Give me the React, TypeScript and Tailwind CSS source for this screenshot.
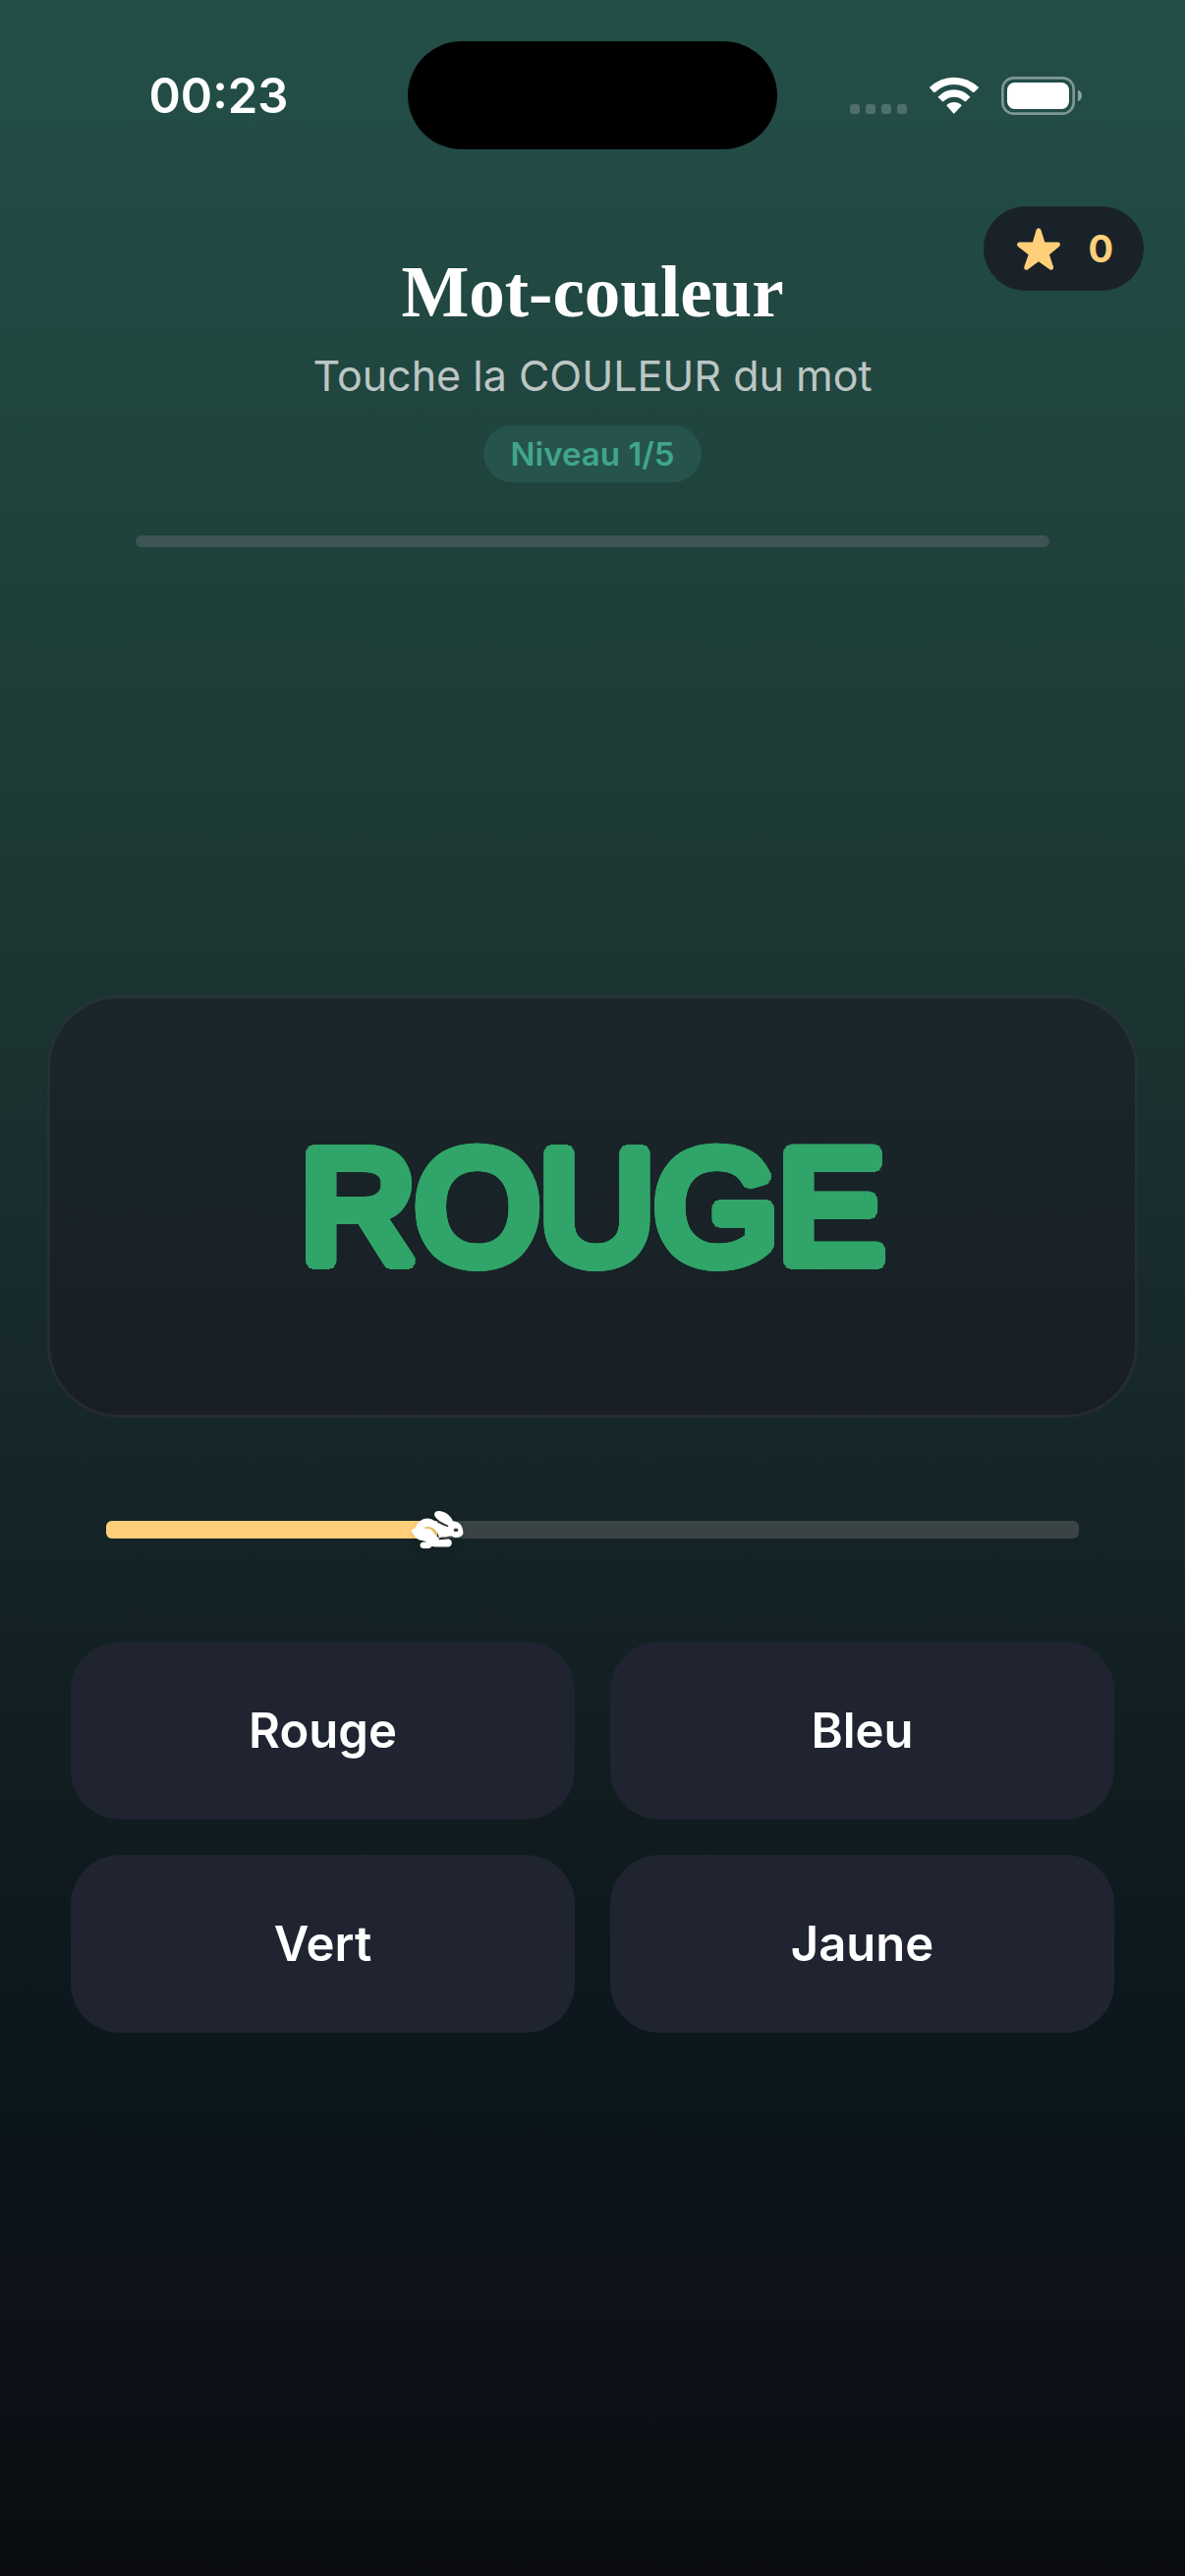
import React, { useState } from 'react';

interface Choice {
  id: string;
  label: string;
}

const CHOICES: Choice[] = [
  { id: 'red', label: 'Rouge' },
  { id: 'blue', label: 'Bleu' },
  { id: 'green', label: 'Vert' },
  { id: 'yellow', label: 'Jaune' },
];

const WORD_COLOR = '#31a569';

// Ring of hard shadows that thickens the word and rounds its corners
const roundedOutline = (radius: number, color: string) =>
  Array.from({ length: 32 }, (_, i) => {
    const angle = (i / 32) * Math.PI * 2;
    return `${(Math.cos(angle) * radius).toFixed(2)}px ${(Math.sin(angle) * radius).toFixed(2)}px 0 ${color}`;
  }).join(', ');

const WifiIcon = () => (
  <svg width="52" height="38" viewBox="315 85 153 114" fill="#fff" aria-hidden="true">
    <path d="M316 118 Q349 87 391 87 Q433 87 467 118 Q467 120 453 132 Q451 134 448 132 Q424 109 391 109 Q359 109 334 132 Q331 134 329 132 Z" />
    <path d="M342 147 Q364 125 391 125 Q419 125 441 147 L428 160 Q426 162 423 160 Q409 147 391 147 Q374 147 360 160 Q357 162 355 160 Z" />
    <path d="M368 173 Q378 163 391 163 Q405 163 415 173 L393 197 Q391 199 389 197 Z" />
  </svg>
);

const BatteryIcon = () => (
  <svg width="82" height="39" viewBox="534 84 246 117" aria-hidden="true">
    <rect x="538" y="88" width="217" height="109" rx="34" fill="none" stroke="#fff" strokeOpacity=".42" strokeWidth="8" />
    <rect x="552" y="102" width="189" height="81" rx="23" fill="#fff" />
    <path d="M768 125 Q780 129 780 142 Q780 155 768 160 Z" fill="#fff" fillOpacity=".48" />
  </svg>
);

const StarIcon = () => (
  <svg width="44" height="43" viewBox="0 0 132 128" fill="#ffd079" aria-hidden="true">
    <path d="M59 5 Q61 0 66 0 Q71 0 73 5 L85 43 L126 43 Q132 44 132 50 Q132 54 128 57 L99 81 L111 118 Q112 125 108 127 Q104 129 100 126 L66 102 L33 126 Q29 129 25 127 Q21 124 22 118 L35 81 L4 57 Q0 54 0 50 Q1 44 6 43 L48 43 Z" />
  </svg>
);

const RabbitIcon = () => (
  <svg width="54" height="39" viewBox="55 82 162 117" fill="#fff" className="drop-shadow-md" aria-hidden="true">
    <path
      fillRule="evenodd"
      d="M57 143 Q61 137 68 137 C74 119 88 106 106 106 C120 106 128 115 142 121 C151 126 159 130 169 132 Q172 129 167 126 L149 117 C139 112 128 103 127 94 C127 84 137 82 147 84 C164 87 178 99 184 114 C194 115 203 118 207 125 C213 132 216 144 215 153 C211 163 199 165 187 164 L180 160 C170 161 166 163 157 163 L144 164 C140 168 139 171 143 171 L168 169 C178 169 182 177 180 184 C178 192 171 194 161 193 L134 193 C119 193 112 185 105 180 Q98 174 82 172 C73 169 68 164 66 158 Q57 151 57 143 Z M193 137 A5 5 0 1 0 193 146 A5 5 0 1 0 193 137 Z M97 133 Q96 138 102 137 C116 136 122 145 130 157 Q136 167 142 163 C139 151 130 136 114 132 Q101 130 97 133 Z"
    />
    <path d="M84 184 C88 177 99 177 107 180 L121 190 C116 198 107 199 96 198 C87 198 82 192 84 184 Z" />
  </svg>
);

const StatusBar = () => (
  <div className="grid grid-cols-[1fr_376px_1fr] items-center pt-[42px]">
    <span className="pl-[30px] text-center text-[49px] leading-none font-semibold">00:23</span>
    <div className="h-[110px] rounded-full bg-black" />
    <div className="flex items-center gap-[22px] pl-[74px]">
      <div className="flex gap-[6px] pt-[28px]">
        {[0, 1, 2, 3].map((dot) => (
          <span key={dot} className="size-[10px] rounded-[3px] bg-white/20" />
        ))}
      </div>
      <WifiIcon />
      <BatteryIcon />
    </div>
  </div>
);

export default function App() {
  const [score] = useState(0);
  const [timeLeft] = useState(34);
  const [picked, setPicked] = useState<string | null>(null);

  return (
    <div className="relative min-h-screen bg-[linear-gradient(180deg,#234f48_0%,#20453f_16%,#1d3933_32%,#1a3130_42%,#152527_58%,#101c20_70%,#0b151c_82%,#0e1118_90%,#0a0c10_100%)] font-['Inter',sans-serif] text-white">
      <StatusBar />

      {/* Score */}
      <div className="absolute top-[210px] right-[42px] flex h-[86px] items-center gap-[28px] rounded-full bg-[#1a2229] pr-[31px] pl-[34px] text-[38px] font-bold text-[#ffd079]">
        <StarIcon />
        {score}
      </div>

      {/* Header */}
      <header className="flex flex-col items-center pt-[104px]">
        <h1 className="font-['Liberation_Serif',serif] text-[73px] leading-[84px] font-bold">Mot-couleur</h1>
        <p className="mt-[14px] text-[43px] leading-[56px] text-[#bcc6c4]">Touche la COULEUR du mot</p>
        <span className="mt-[23px] rounded-full bg-[#26534c] px-[28px] text-[33px] leading-[58px] font-semibold text-[#41a58c]">
          Niveau 1/5
        </span>
      </header>
      <div className="mx-[138px] mt-[54px] h-[12px] rounded-[6px] bg-[#3e5454]" />

      {/* Word card */}
      <main className="px-[48px] pt-[456px]">
        <div className="flex h-[430px] items-center justify-center rounded-[74px] border-[3px] border-white/6 bg-[linear-gradient(180deg,#1a262b,#182227_60%,#191e26)] bg-origin-border">
          <span
            className="font-['Liberation_Sans',sans-serif] text-[162px] leading-none text-[#31a569]"
            style={{ textShadow: roundedOutline(8, WORD_COLOR) }}
          >
            ROUGE
          </span>
        </div>

        {/* Timer */}
        <div className="relative mx-[60px] mt-[105px] h-[18px] rounded-[6px] bg-[#3a4447]">
          <div className="h-full rounded-l-[6px] bg-[#ffd079]" style={{ width: `${timeLeft}%` }} />
          <div className="absolute top-1/2 -translate-1/2" style={{ left: `${timeLeft}%` }}>
            <RabbitIcon />
          </div>
        </div>

        {/* Answers */}
        <div className="mx-[24px] mt-[105px] grid grid-cols-2 gap-[36px]">
          {CHOICES.map((choice) => (
            <button
              key={choice.id}
              type="button"
              aria-pressed={picked === choice.id}
              onClick={() => setPicked(choice.id)}
              className="h-[181px] rounded-[50px] bg-[#1f2430] text-[49px] font-semibold"
            >
              {choice.label}
            </button>
          ))}
        </div>
      </main>
    </div>
  );
}
